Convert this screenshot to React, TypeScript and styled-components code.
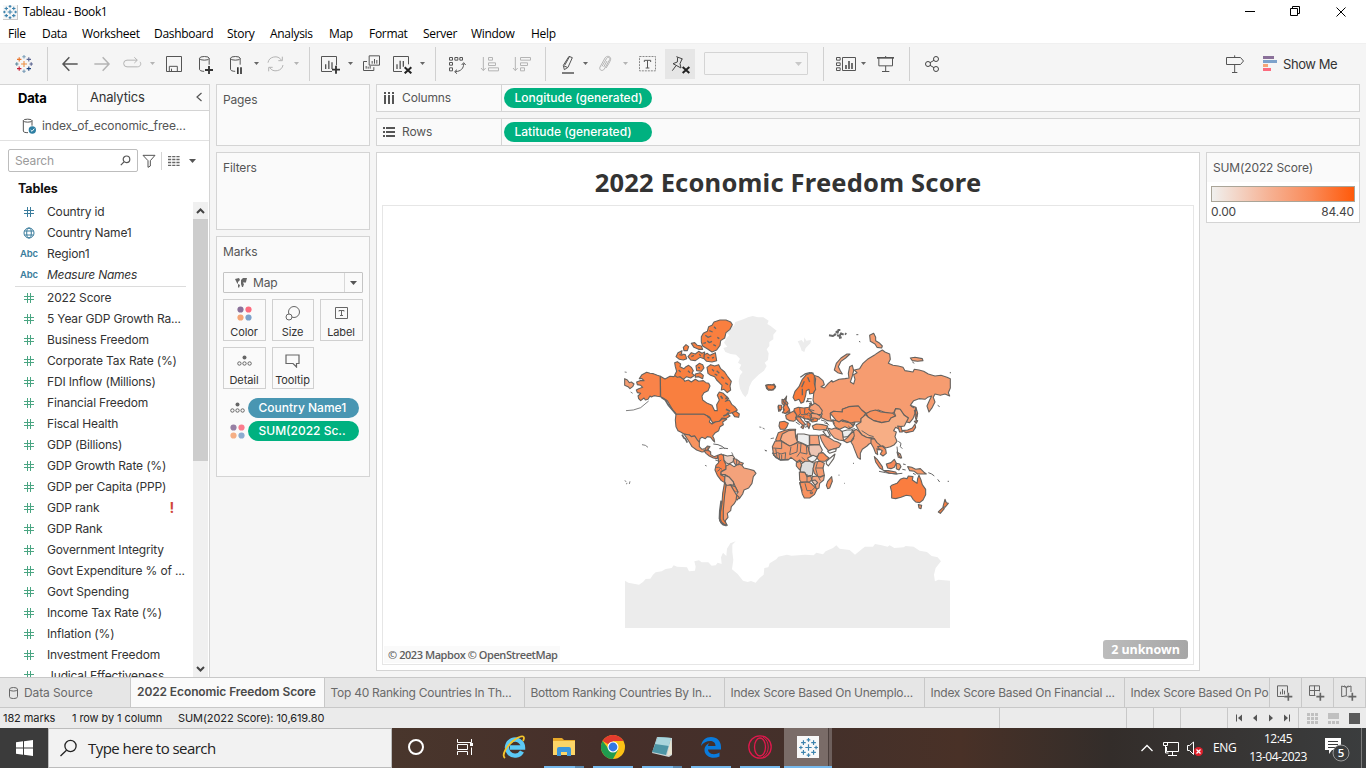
import React from "react";
import styled, { createGlobalStyle } from "styled-components";

const book = `Inter, "Liberation Sans", sans-serif`;
const system = `"Open Sans", "Noto Sans", sans-serif`;

const GlobalStyle = createGlobalStyle`
  * { box-sizing: border-box; }
  body { margin: 0; overflow: hidden; background: #fff; }
  svg { display: block; flex: none; }
`;

const Window = styled.div`
  width: 1366px;
  height: 768px;
  display: flex;
  flex-direction: column;
  overflow: hidden;
  background: #f5f5f5;
  font-family: ${book};
  font-size: 12px;
  letter-spacing: -0.14px;
  color: #333;
  white-space: nowrap;
`;

/* ---------- title bar and menu ---------- */
const TitleBar = styled.header`
  height: 22px;
  display: flex;
  align-items: center;
  background: #fff;
  padding: 2px 0 0 3px;
  gap: 5px;
`;
const WindowTitle = styled.span`
  flex: 1;
  font: 12px/18px ${system};
  letter-spacing: -0.37px;
  color: #000;
`;
const MenuBar = styled.nav`
  height: 22px;
  display: flex;
  padding-left: 8px;
  background: #fff;
  border-bottom: 1px solid #f0f0f0;
`;
const MenuItem = styled.span<{ $w: number }>`
  width: ${(p) => p.$w}px;
  font: 12px/23px ${system};
  letter-spacing: -0.3px;
  color: #000;
`;

/* ---------- toolbar ---------- */
const ToolBar = styled.div`
  height: 40px;
  display: flex;
  align-items: center;
  background: #f5f5f5;
`;
const Tool = styled.div<{ $gap: number; $active?: boolean }>`
  margin-left: ${(p) => p.$gap}px;
  display: flex;
  align-items: center;
  justify-content: center;
  background: ${(p) => (p.$active ? "#e6e6e6" : "none")};
`;
const ToolDivider = styled.div<{ $gap: number }>`
  margin-left: ${(p) => p.$gap}px;
  width: 1px;
  height: 34px;
  background: #d0d0d0;
`;
const FitSelect = styled.div`
  margin: 0 0 1px 9px;
  width: 104px;
  height: 23px;
  border: 1px solid #d4d4d4;
  border-radius: 1px;
  display: flex;
  align-items: center;
  justify-content: flex-end;
  padding-right: 5px;
`;
const ShowMe = styled.span`
  margin-left: 5px;
  padding-bottom: 1px;
  font-size: 13px;
  letter-spacing: -0.42px;
  color: #333;
`;

/* ---------- main area ---------- */
const Main = styled.main`
  height: 593px;
  display: flex;
`;
const DataPane = styled.aside`
  width: 210px;
  background: #fff;
  border-right: 1px solid #d4d4d4;
  border-top: 1px solid #d4d4d4;
  display: flex;
  flex-direction: column;
`;
const PaneTabs = styled.div`
  display: flex;
  height: 26px;
`;
const PaneTab = styled.div<{ $active?: boolean }>`
  width: ${(p) => (p.$active ? 77 : 132)}px;
  display: flex;
  align-items: center;
  justify-content: space-between;
  padding: 0 7px 1px ${(p) => (p.$active ? 18 : 12)}px;
  font-size: 13px;
  font-weight: ${(p) => (p.$active ? 700 : 400)};
  letter-spacing: -0.2px;
  color: ${(p) => (p.$active ? "#000" : "#333")};
  background: ${(p) => (p.$active ? "#fff" : "#fafafa")};
  border-left: ${(p) => (p.$active ? "none" : "1px solid #d4d4d4")};
  border-bottom: ${(p) => (p.$active ? "none" : "1px solid #d4d4d4")};
`;
const SourceRow = styled.div`
  height: 30px;
  display: flex;
  align-items: center;
  gap: 5px;
  padding-left: 22px;
  color: #555;
  border-bottom: 1px solid #e1e1e1;
`;
const SearchRow = styled.div`
  display: flex;
  align-items: center;
  padding: 8px 0 0 8px;
`;
const SearchBox = styled.div`
  width: 130px;
  height: 23px;
  border: 1px solid #bdbdbd;
  border-radius: 2px;
  display: flex;
  align-items: center;
  justify-content: space-between;
  padding: 0 6px;
  color: #9a9a9a;
  margin-right: 4px;
`;
const ThinRule = styled.div`
  width: 1px;
  height: 18px;
  margin: 0 6px 0 5px;
  background: #d4d4d4;
`;
const TablesHeading = styled.h2`
  margin: 0;
  padding: 8px 0 0 18px;
  height: 29px;
  font-size: 12.5px;
  line-height: 18px;
  font-weight: 700;
  color: #111;
`;
const FieldArea = styled.div`
  flex: 1;
  min-height: 0;
  display: flex;
`;
const Fields = styled.div`
  flex: 1;
  overflow: hidden;
`;
const Field = styled.div`
  height: 21px;
  display: flex;
  align-items: center;
  color: #333;
`;
const FieldIcon = styled.span`
  width: 47px;
  padding-left: 20px;
  font-size: 9.5px;
  font-weight: 600;
  color: #3a7c9c;
`;
const FieldName = styled.span<{ $italic?: boolean }>`
  flex: 1;
  font-style: ${(p) => (p.$italic ? "italic" : "normal")};
  letter-spacing: ${(p) => (p.$italic ? -0.25 : -0.16)}px;
`;
const Warning = styled.b`
  margin-right: 19px;
  font-size: 14px;
  color: #d0453a;
`;
const FieldDivider = styled.div`
  height: 1px;
  margin: 1px 7px 0 15px;
  background: #dcdcdc;
`;
const ScrollTrack = styled.div`
  width: 16px;
  display: flex;
  flex-direction: column;
  background: #f0f0f0;
  margin-top: 1px;
  border-right: 1px solid #fff;
`;
const ScrollButton = styled.div`
  height: 17px;
  display: flex;
  align-items: center;
  justify-content: center;
`;
const ScrollThumb = styled.div`
  height: 242px;
  background: #cdcdcd;
`;
const ScrollSpace = styled.div`
  flex: 1;
`;

/* ---------- shelves ---------- */
const ShelfColumn = styled.div`
  margin-left: 6px;
  width: 154px;
  display: flex;
  flex-direction: column;
  gap: 6px;
`;
const Card = styled.section<{ $h: number }>`
  height: ${(p) => p.$h}px;
  background: #fafafa;
  border: 1px solid #d4d4d4;
`;
const CardTitle = styled.div`
  padding: 6px 0 0 6px;
  line-height: 18px;
  color: #555;
`;
const MarkType = styled.div`
  margin: 11px 6px 0;
  height: 21px;
  padding-left: 10px;
  display: flex;
  align-items: center;
  border: 1px solid #c4c4c4;
  border-radius: 1px;
  color: #555;
  background: #fafafa;
`;
const MarkTypeName = styled.span`
  flex: 1;
  margin-left: 5px;
`;
const MarkTypeArrow = styled.span`
  width: 18px;
  height: 100%;
  border-left: 1px solid #d8d8d8;
  display: flex;
  align-items: center;
  justify-content: center;
`;
const MarkGrid = styled.div`
  display: grid;
  grid-template-columns: 43px 42px 43px;
  grid-auto-rows: 42px;
  gap: 6px;
  padding: 6px 6px 0;
`;
const MarkButton = styled.div`
  border: 1px solid #d0d0d0;
  display: flex;
  flex-direction: column;
  align-items: center;
  justify-content: space-between;
  padding: 3px 1px 0 0;
  font-size: 11px;
  line-height: 15px;
  letter-spacing: -0.1px;
  color: #333;
`;
const Encodings = styled.div`
  display: flex;
  flex-direction: column;
  gap: 3px;
  padding: 9px 0 0 12px;
`;
const Encoding = styled.div`
  display: flex;
  align-items: center;
  gap: 3px;
`;
const Pill = styled.div<{ $w: number; $blue?: boolean }>`
  width: ${(p) => p.$w}px;
  height: 20px;
  border-radius: 10px;
  padding-left: 10.5px;
  font-size: 12px;
  line-height: 20px;
  font-weight: 500;
  letter-spacing: 0;
  color: #fff;
  background: ${(p) => (p.$blue ? "#4996b2" : "#00b180")};
`;
const WorkArea = styled.div`
  flex: 1;
  margin: 0 6px;
  display: flex;
  flex-direction: column;
  gap: 6px;
`;
const Shelf = styled.div`
  height: 28px;
  display: flex;
  align-items: center;
  background: #fafafa;
  border: 1px solid #d4d4d4;
`;
const ShelfName = styled.div`
  width: 125px;
  height: 100%;
  padding: 0 0 1px 6px;
  margin-right: 2px;
  display: flex;
  align-items: center;
  gap: 6px;
  color: #555;
  border-right: 1px solid #d4d4d4;
`;
const Canvas = styled.div`
  display: flex;
  align-items: flex-start;
  gap: 6px;
`;
const View = styled.section`
  width: 824px;
  height: 519px;
  padding: 0 5px;
  background: #fff;
  border: 1px solid #d4d4d4;
`;
const ViewTitle = styled.h1`
  margin: 0;
  height: 52px;
  text-align: center;
  font: 700 25.5px/58px "Noto Sans", sans-serif;
  letter-spacing: 0.2px;
  color: #333;
`;
const MapFrame = styled.div`
  position: relative;
  width: 812px;
  height: 460px;
  border: 1px solid #e6e6e6;
`;
const Attribution = styled.span`
  position: absolute;
  left: 1px;
  bottom: 1px;
  padding: 0 2px 0 4px;
  font: 600 11px/17px ${system};
  letter-spacing: -0.44px;
  color: #5e5e5e;
  background: #fafafa;
`;
const UnknownBadge = styled.span`
  position: absolute;
  right: 5px;
  bottom: 5px;
  width: 85px;
  height: 19px;
  border-radius: 3px;
  text-align: center;
  font: 700 12.5px/19px ${system};
  letter-spacing: -0.1px;
  color: #fff;
  background: linear-gradient(90deg, #bcbcbc, #a6a6a6);
`;
const Legend = styled.aside`
  width: 154px;
  height: 71px;
  background: #fff;
  border: 1px solid #d4d4d4;
`;
const LegendTitle = styled.div`
  height: 29px;
  padding: 0 6px;
  line-height: 30px;
  background: #fafafa;
  color: #555;
`;
const Ramp = styled.div`
  margin: 4px 4px 0;
  height: 16px;
  border: 1px solid #aaa598;
  background: linear-gradient(90deg, #f0f0ee, #f6b294 40%, #fa8a58 70%, #ff5a0a);
`;
const RampRange = styled.div`
  display: flex;
  justify-content: space-between;
  padding: 0 5px 0 4px;
  line-height: 19px;
  color: #444;
`;

/* ---------- sheet tabs and status ---------- */
const SheetTabs = styled.nav`
  height: 31px;
  display: flex;
  background: #e6e6e6;
  border-top: 1px solid #c8c8c8;
  border-bottom: 1px solid #c8c8c8;
`;
const SheetTab = styled.div<{ $w: number; $active?: boolean; $tight?: boolean }>`
  width: ${(p) => p.$w}px;
  display: flex;
  align-items: center;
  gap: 6px;
  padding-left: ${(p) => (p.$tight ? 5.5 : 6)}px;
  overflow: hidden;
  border-right: 1px solid #c8c8c8;
  font-size: 12px;
  font-weight: ${(p) => (p.$active ? 600 : 400)};
  letter-spacing: ${(p) => (p.$tight ? -0.26 : -0.1)}px;
  padding-bottom: ${(p) => (p.$active ? 2 : 0)}px;
  color: ${(p) => (p.$active ? "#4a4a4a" : "#6a6a6a")};
  background: ${(p) => (p.$active ? "#fafafa" : "none")};
`;
const StatusBar = styled.footer`
  height: 20px;
  display: flex;
  align-items: center;
  background: #ebebeb;
  font-size: 11px;
  color: #222;
`;
const StatusText = styled.span<{ $w: number }>`
  width: ${(p) => p.$w}px;
  letter-spacing: -0.08px;
`;
const StatusCell = styled.div<{ $w: number }>`
  width: ${(p) => p.$w}px;
  height: 20px;
  border-left: 1px solid #c8c8c8;
  display: flex;
  align-items: center;
  justify-content: center;
`;

/* ---------- taskbar ---------- */
const TaskBar = styled.div`
  height: 40px;
  display: flex;
  background: linear-gradient(90deg, #3b3b3b 0, #3b3b3b 48px, #49362c 392px, #462f2a 600px, #44302a 830px, #493127 960px, #332d2a 1110px, #3b3d3e 1366px);
  color: #fff;
`;
const StartButton = styled.div`
  width: 48px;
  display: flex;
  align-items: center;
  justify-content: center;
`;
const TaskSearch = styled.div`
  width: 344px;
  display: flex;
  align-items: center;
  gap: 11px;
  padding-left: 11px;
  background: #f2f2f2;
  border: 1px solid #bcbcbc;
  color: #222;
  font: 15px/38px ${system};
  letter-spacing: -0.55px;
`;
const TaskButton = styled.div<{ $w: number; $active?: boolean }>`
  width: ${(p) => p.$w}px;
  height: 40px;
  display: flex;
  flex-direction: column;
  align-items: center;
  background: ${(p) => (p.$active ? "linear-gradient(90deg, #7a6c68 0 44px, #4b3f3c 44px 45px, #6d5f5c 45px)" : "none")};
`;
const TaskUnderline = styled.div<{ $w: number; $split?: boolean }>`
  width: ${(p) => p.$w}px;
  height: 2px;
  background: ${(p) => (p.$split ? "linear-gradient(90deg, #76b9ed 31px, #5a89b0 31px)" : "#76b9ed")};
`;
const Tray = styled.div`
  flex: 1;
  display: flex;
  justify-content: flex-end;
  align-items: center;
  font: 12px/18px ${system};
`;
const Language = styled.span`
  width: 30px;
  margin-left: 5px;
  letter-spacing: -0.4px;
`;
const Clock = styled.div`
  width: 70px;
  text-align: center;
  letter-spacing: -0.5px;
  line-height: 18px;
  margin-right: 7px;
`;
const DesktopEdge = styled.div`
  width: 5px;
  height: 40px;
  border-left: 1px solid #7c7c7c;
`;

const IconSlot = styled.span`
  width: 18px;
  display: flex;
  justify-content: center;
`;
const IconBox = styled.span`
  min-width: 16px;
  height: 20px;
  display: flex;
  align-items: center;
  justify-content: center;
`;
const AppIcon = styled.span`
  height: 38px;
  display: flex;
  align-items: center;
`;
const TableauTile = styled.span`
  width: 22px;
  height: 22px;
  display: flex;
  align-items: center;
  justify-content: center;
  background: #f8f8f8;
`;
const SourceIcon = styled.svg`
  margin-left: 3px;
`;
const Indent = styled.span`
  display: inline-block;
  width: 3px;
`;
const EdgeGap = styled.span`
  width: 9px;
`;

/* Glyphs are drawn on a grid of three units per pixel. */
type GlyphProps = { w: number; h?: number; vb: string; color?: string; children: React.ReactNode };
const Glyph = ({ w, h = 20, vb, color = "#555", children }: GlyphProps) => (
  <svg width={w} height={h} viewBox={vb} fill="none" stroke={color} strokeWidth={3}>
    {children}
  </svg>
);

const Caret = ({ color = "#666" }: { color?: string }) => (
  <svg width={7} height={4} viewBox="0 0 7 4">
    <path d="M1 0h5L3.5 3z" fill={color} />
  </svg>
);
const BigCaret = ({ color = "#555" }: { color?: string }) => (
  <svg width={7} height={4} viewBox="0 0 7 4">
    <path d="M0 0h7L3.5 4z" fill={color} />
  </svg>
);

const crosses: [number, number, number, string][] = [
  [9, 9, 3, "#eb8f44"],
  [9, 1.8, 1.7, "#7b9fb8"],
  [9, 16.2, 1.7, "#7599b5"],
  [1.8, 9, 1.7, "#5b879b"],
  [16.2, 9, 1.7, "#5b6591"],
  [4.2, 4.4, 2.2, "#e8762d"],
  [13.8, 4.4, 2.2, "#5c6692"],
  [4.2, 13.6, 2.2, "#c72037"],
  [13.8, 13.6, 2.2, "#1f447e"],
];
const TableauMark = ({ size, mono }: { size: number; mono?: boolean }) => (
  <svg width={size} height={size} viewBox="0 0 18 18">
    {crosses.map(([x, y, r, c], i) => (
      <path key={i} d={`M${x - r} ${y}h${2 * r}M${x} ${y - r}v${2 * r}`} stroke={mono ? "#3d83ad" : c} strokeWidth={1.1} />
    ))}
  </svg>
);

const Plus = ({ x, y }: { x: number; y: number }) => (
  <path d={`M${x - 12} ${y}h24M${x} ${y - 12}v24`} stroke="#333" strokeWidth={5.5} />
);
const Cross = ({ x, y }: { x: number; y: number }) => (
  <path d={`M${x - 10} ${y - 9}l20 18M${x + 10} ${y - 9}l-20 18`} stroke="#222" strokeWidth={6} />
);

const Hash = ({ color = "#4aa582" }: { color?: string }) => (
  <svg width={10} height={10} viewBox="0 0 10 10">
    <path d="M3.5 0v10M6.500 0v10M0 3.500h10M0 6.500h10" stroke={color} strokeWidth={1} fill="none" />
  </svg>
);
const Globe = () => (
  <svg width={12} height={12} viewBox="0 0 12 12" fill="none" stroke="#3a7c9c">
    <circle cx={6} cy={6} r={5} />
    <ellipse cx={6} cy={6} rx={2.3} ry={5} />
    <path d="M1.500 4h9M1.500 8h9" />
  </svg>
);
const ColorDots = ({ soft }: { soft?: boolean }) => (
  <svg width={15} height={15} viewBox="0 0 15 15" opacity={soft ? 0.88 : 1}>
    <circle cx={3.5} cy={3.5} r={3.1} fill="#8a7099" />
    <circle cx={11.5} cy={3.5} r={3.1} fill="#fc6b7e" />
    <circle cx={3.5} cy={11.5} r={3.1} fill="#f5a576" />
    <circle cx={11.5} cy={11.5} r={3.1} fill="#7da2cb" />
  </svg>
);
const DetailDots = () => (
  <svg width={15} height={12} viewBox="0 0 15 12" fill="none" stroke="#666">
    <circle cx={7.5} cy={2.5} r={2} fill="#666" stroke="none" />
    <circle cx={2.4} cy={8.5} r={1.7} />
    <circle cx={7.5} cy={8.5} r={1.7} />
    <circle cx={12.6} cy={8.5} r={1.7} />
  </svg>
);

const Toolbar = () => (
  <ToolBar>
    <Tool $gap={15}><TableauMark size={18} /></Tool>
    <ToolDivider $gap={14} />
    <Tool $gap={13}><Glyph w={18} vb="183 162 54 60"><path d="M233 192H190M208 172l-19 20 19 20" strokeWidth={4.5} /></Glyph></Tool>
    <Tool $gap={14}><Glyph w={18} vb="279 162 54 60" color="#b4b4b4"><path d="M283 192h43M308 172l19 20-19 20" strokeWidth={4.5} /></Glyph></Tool>
    <Tool $gap={11}><Glyph w={20} vb="366 162 60 60" color="#b4b4b4"><path d="M411 180.500H381a10 10 0 0 0 0 20h31c9 0 13-8 8-15M403 172l9 8.500-9 8.500" /></Glyph></Tool>
    <Tool $gap={7}><Caret color="#b4b4b4" /></Tool>
    <Tool $gap={9}><Glyph w={18} vb="495 162 54 60"><path d="M499.500 169.500h45v45h-45zM508 214v-15h24v15M514.500 214v-8" /></Glyph></Tool>
    <Tool $gap={14}>
      <Glyph w={18} vb="591 162 54 60">
        <ellipse cx={613} cy={175} rx={14.500} ry={5.500} /><path d="M598.500 175v33c0 3 5 6 14 6M627.500 175v19" /><Plus x={627} y={210} />
      </Glyph>
    </Tool>
    <Tool $gap={13}>
      <Glyph w={18} vb="684 162 54 60">
        <ellipse cx={706} cy={175} rx={14.500} ry={5.500} /><path d="M691.500 175v33c0 3 5 6 14 6M720.500 175v19" /><path d="M713.500 202v20M723 202v20" stroke="#333" strokeWidth={5} />
      </Glyph>
    </Tool>
    <Tool $gap={7}><Caret /></Tool>
    <Tool $gap={7}>
      <Glyph w={18} vb="801 162 54 60" color="#b4b4b4">
        <path d="M804 188a22 21 0 0 1 40-8M849 195a22 21 0 0 1-40 8M847 170v12h-12M806 214v-12h12" />
      </Glyph>
    </Tool>
    <Tool $gap={8}><Caret color="#b4b4b4" /></Tool>
    <ToolDivider $gap={9} />
    <Tool $gap={10}>
      <Glyph w={20} vb="960 162 60 60">
        <path d="M996 214.500H964.500v-45h45V196" /><path d="M977 207v-14M986.500 207v-25M996 207v-20" strokeWidth={4} /><Plus x={1008} y={209} />
      </Glyph>
    </Tool>
    <Tool $gap={7}><Caret /></Tool>
    <Tool $gap={8}>
      <Glyph w={20} vb="1086 162 60 60">
        <path d="M1107.500 167.500h31v28h-31zM1101 184.500h-10.500v27h31v-10M1098.500 206v-8M1104.500 206v-6M1110.500 206v-8M1116.500 191v-8M1123.500 191v-14M1130.500 191v-11" />
      </Glyph>
    </Tool>
    <Tool $gap={10}>
      <Glyph w={20} vb="1176 162 60 60">
        <path d="M1206 214.500H1180.500v-45h45V193" /><path d="M1191 207v-14M1200.500 207v-25M1210 200v-17" strokeWidth={4} /><Cross x={1224} y={211} />
      </Glyph>
    </Tool>
    <Tool $gap={7}><Caret /></Tool>
    <ToolDivider $gap={9} />
    <Tool $gap={12}>
      <Glyph w={18} vb="24 162 54 60">
        <path d="M28.500 172.500h9v8h-9zM44.500 172.500h9v8h-9zM59.500 172.500h8v8h-8zM28.500 187.500h9v8h-9zM28.500 203.500h9v9h-9z" />
        <path d="M71 191c0 14-8 23-25 24M65 195l6-7 6 7M51 209l-7 6 7 6" />
      </Glyph>
    </Tool>
    <Tool $gap={14}>
      <Glyph w={20} vb="120 162 60 60" color="#b4b4b4"><path d="M130 171v40M123 204l7 8 7-8M145.500 172.500h12v8h-12zM145.500 188.500h21v8h-21zM145.500 203.500h30v9h-30z" /></Glyph>
    </Tool>
    <Tool $gap={12}>
      <Glyph w={20} vb="216 162 60 60" color="#b4b4b4"><path d="M226 171v40M219 204l7 8 7-8M241.500 172.500h30v8h-30zM241.500 188.500h21v8h-21zM241.500 203.500h12v9h-12z" /></Glyph>
    </Tool>
    <ToolDivider $gap={13} />
    <Tool $gap={14}>
      <Glyph w={16} vb="360 162 48 60">
        <path d="M387 169l10 4-13 29-11 7-3-13z M372 198l10 4M389 169l-15 27" /><path d="M366 219h36" strokeWidth={4.500} />
      </Glyph>
    </Tool>
    <Tool $gap={6}><Caret /></Tool>
    <Tool $gap={9}>
      <Glyph w={14} vb="474 162 42 60" color="#b4b4b4">
        <path d="M486 199l14-24c4-6 12-2 9 4l-16 28c-5 8-17 4-13-6l15-27c5-8 18-6 17 4-1 6-10 20-14 26M491 201l10-18" />
      </Glyph>
    </Tool>
    <Tool $gap={10}><Caret color="#b4b4b4" /></Tool>
    <Tool $gap={9}>
      <Glyph w={18} vb="594 162 54 60">
        <path d="M598.500 169.500h48v43h-48z" strokeDasharray="6 3" stroke="#888" /><path d="M613 186v-5h19v5M622.500 181v23M617 204h11" />
      </Glyph>
    </Tool>
    <Tool $gap={9} $active>
      <Glyph w={30} h={30} vb="675 147 90 90" color="#444">
        <path d="M709 170l19 7M713 172l-1 14-13 5 24 13-3-13 6-14M708 197l-11 15" /><Cross x={738} y={210} />
      </Glyph>
    </Tool>
    <FitSelect><BigCaret color="#c8c8c8" /></FitSelect>
    <ToolDivider $gap={15} />
    <Tool $gap={11}>
      <Glyph w={22} vb="1185 162 66 60">
        <path d="M1189.500 172.500h11v8h-11zM1189.500 188.500h11v8h-11zM1189.500 203.500h11v8h-11zM1207.500 172.500h39v39h-39z" /><path d="M1218 207v-12M1227 207v-24M1236 207v-18" strokeWidth={5} />
      </Glyph>
    </Tool>
    <Tool $gap={3}><Caret /></Tool>
    <Tool $gap={9}>
      <Glyph w={18} vb="1308 162 54 60"><path d="M1316.500 174v23.500h41V174M1337 198v16M1326 214.500h22M1337 168v5" /><path d="M1311 173.500h51" strokeWidth={5} /></Glyph>
    </Tool>
    <ToolDivider $gap={15} />
    <Tool $gap={14}>
      <Glyph w={16} vb="72 162 48 60" color="#444"><circle cx={84} cy={192} r={7.500} /><circle cx={108} cy={177} r={7.500} /><circle cx={108} cy={207} r={7.500} /><path d="M90 188l12-7M90 196l12 7" /></Glyph>
    </Tool>
    <Tool $gap={285}>
      <Glyph w={20} vb="975 162 60 60"><path d="M979.500 172.500h42l9 10.500-9 10.500h-42zM1004 166v6M1004 194v23M996 217.500h16" /></Glyph>
    </Tool>
    <Tool $gap={17}>
      <svg width={16} height={20} viewBox="0 0 16 20">
        <path d="M1 2h11v3H1z" fill="#8a7099" /><path d="M1 6h14v3H1z" fill="#7da2cb" /><path d="M1 10h5v3H1z" fill="#f5a576" /><path d="M1 14h8v3H1z" fill="#fc6b7e" />
      </svg>
    </Tool>
    <ShowMe>Show Me</ShowMe>
  </ToolBar>
);

/* ---------- map ---------- */
type Shape = [fill: string, d: string];

const americas: Shape[] = [
  ["#f98349", "M62 200 66 194 80 187 90 190 100 191 112 196 121 199 121 260 112 259 102 257 94 261 90 258 84 268 76 270 72 264 62 272 56 266 54 258 62 250 52 248 49 240 56 236 68 232 62 226 52 224 50 216 60 212 72 212 66 206 58 206Z"],
  ["#f69c70", "M14 206 22 210 28 218 34 216 42 222 38 230 30 236 24 230 14 226Z"],
  ["#f97f3f", "M121 199 135 207 150 199 160 200 172 194 182 202 190 206 194 214 205 210 214 216 226 208 236 214 250 212 258 218 266 220 270 228 264 242 252 248 246 258 248 270 262 280 276 286 284 302 292 302 290 284 298 270 292 256 298 246 310 250 318 258 326 266 316 274 328 270 336 284 344 290 352 300 344 306 332 310 322 310 330 318 318 326 306 324 298 334 278 338 268 322 252 313 168 313 158 300 150 286 142 272 122 260Z"],
  ["#f97f3f", "M336 308 348 304 358 312 356 322 344 320Z"],
  ["#f97f3f", "M164 158 172 155 182 162 180 170 192 176 198 170 206 166 214 172 220 182 216 190 224 196 212 204 200 200 190 208 180 200 172 202 164 196 170 184 166 170Z"],
  ["#f97f3f", "M261 172 272 164 284 168 296 164 302 176 314 186 322 198 334 214 330 228 332 240 322 248 312 238 304 240 306 226 298 218 290 210 284 200 272 196 264 190Z"],
  ["#f97f3f", "M168 140 174 128 186 122 184 132 196 134 200 146 190 150 178 148ZM190 112 198 104 206 110 202 122 192 122ZM204 140 214 128 226 132 236 124 246 130 254 126 252 146 240 142 226 152 212 150ZM214 100 224 98 232 106 244 108 248 118 236 118 222 112ZM252 134 262 130 270 136 286 128 290 152 276 156 260 154 252 146ZM228 168 238 160 248 164 252 174 244 184 230 182ZM226 192 240 188 250 196 248 206 236 200 226 202Z"],
  ["#f97f3f", "M244 80 250 70 262 64 266 50 276 46 282 36 300 30 318 30 332 36 337 44 330 58 318 68 314 84 302 92 300 106 290 120 276 126 264 118 248 108 244 96Z"],
  ["#f98349", "M168 313 252 313 262 318 272 326 268 336 276 342 286 336 298 334 308 326 320 328 308 336 310 344 300 350 296 362 286 368 278 378 282 386 284 396 278 390 272 382 262 380 256 386 246 382 240 386 238 397 232 390 224 378 214 380 208 375 192 372 182 366 174 362 168 350 166 330Z"],
  ["#f7935f", "M192 372 208 375 214 380 224 378 232 390 238 397 238 410 246 418 256 416 262 408 270 410 260 424 246 426 230 420 216 410 210 400 204 390Z"],
  ["#f8895a", "M252 422 264 420 272 426 272 434 282 440 294 436 292 446 280 444 268 438 258 430Z"],
  ["#f98048", "M294 436 304 432 312 438 312 452 318 464 318 478 304 484 302 494 314 500 314 518 304 512 292 496 285 480 288 466 296 458Z"],
  ["#e9cdbf", "M310 434 322 438 338 436 344 444 338 456 326 462 318 458 312 450Z"],
  ["#f69a70", "M340 446 350 448 360 456 370 460 362 470 348 466 342 458Z"],
  ["#f3a27b", "M303 486 318 478 318 468 330 462 342 470 356 462 366 466 372 474 388 478 402 482 408 490 400 500 396 520 386 534 372 540 368 552 358 566 348 556 354 546 346 530 340 516 328 502 316 494 304 494Z"],
  ["#edb79b", "M315 496 328 502 340 516 342 526 330 524 320 528 314 516Z"],
  ["#f7905d", "M332 526 346 530 354 546 344 546ZM346 552 358 562 352 570 344 564Z"],
  ["#f8a175", "M318 526 332 526 344 546 350 556 348 572 342 582 334 590 332 602 322 610 324 622 316 632 318 642 308 638 306 610 310 570Z"],
  ["#f97f3f", "M314 516 318 526 314 556 310 600 310 628 322 646 308 644 299 632 300 614 306 580 308 550Z"],
  ["#f97f3f", "M437 226 446 224 452 228 462 222 467 230 460 240 446 241 440 236Z"],
  ["#f98048", "M486 268 494 270 500 258 498 272 504 280 500 290 508 298 510 308 494 310 490 298 494 288 486 280ZM474 290 484 290 482 302 476 304Z"],
];

const eastern: Shape[] = [
  ["#f69c70", "M150 196 152 176 146 166 160 170 174 182 178 194 168 200 178 204 190 190 200 182 204 186 222 178 240 176 252 174 250 160 254 140 262 136 266 152 262 168 256 186 266 192 270 178 266 164 276 158 268 150 284 146 294 130 310 116 330 104 342 96 352 90 360 96 374 102 376 118 370 130 384 136 400 138 414 142 420 152 444 156 448 148 462 150 476 154 490 162 510 168 528 166 546 172 556 176 556 204 550 218 554 228 540 222 526 226 510 222 505 232 510 246 502 262 492 276 486 258 494 240 500 228 488 232 480 238 462 236 446 242 436 256 452 262 450 280 444 296 434 308 424 306 430 294 418 286 404 268 392 266 386 278 376 282 356 276 340 270 328 274 304 280 290 270 280 258 252 260 232 268 232 276 206 274 196 280 196 292 200 304 188 302 176 296 166 292 172 282 160 268 150 258 144 240 146 222Z"],
  ["#f8915e", "M196 280 206 274 232 276 232 268 252 260 280 258 290 270 302 280 296 290 288 296 288 306 268 306 258 310 246 304 232 300 222 306 214 302 206 292Z"],
  ["#f8915e", "M303 281 316 274 332 270 348 276 366 278 384 280 392 288 378 294 372 304 350 308 326 302 310 292Z"],
  ["#f7ae85", "M273 316 288 306 288 296 302 284 310 292 326 302 350 308 372 304 378 294 392 288 388 278 392 266 406 268 418 286 430 294 424 306 418 318 406 320 400 326 392 322 386 332 394 336 390 350 396 364 388 374 376 380 362 384 354 378 344 380 336 370 326 366 326 354 304 352 290 344 282 332Z"],
  ["#f6a077", "M264 334 274 328 282 334 290 344 304 352 322 356 320 368 312 372 306 378 292 388 286 400 286 418 278 412 270 392 264 376 258 366 266 356Z"],
  ["#f69c70", "M236 362 248 352 256 342 266 334 268 348 258 364 246 368Z"],
  ["#ededed", "M232 334 246 330 264 330 256 342 248 350 234 352Z"],
  ["#f7a883", "M188 324 200 328 210 324 226 330 232 336 234 352 236 362 222 360 208 354 196 340Z"],
  ["#f79a69", "M202 300 214 302 222 306 232 300 246 306 258 310 270 308 264 320 252 326 240 320 224 328 212 322 206 312Z"],
  ["#f79a69", "M142 318 154 312 172 314 188 318 184 328 164 330 146 328Z"],
  ["#f4a07a", "M164 346 176 344 190 352 206 362 218 366 228 372 222 382 204 388 190 392 180 380 170 362Z"],
  ["#fafafa", "M174 334 186 330 196 348 186 350ZM188 394 202 388 214 386 212 394 194 400Z"],
  ["#f97b3a", "M84 232 90 214 102 200 112 178 124 164 140 158 148 166 148 190 152 208 144 220 134 222 132 208 124 212 122 226 116 246 108 250 102 238 90 242Z"],
  ["#f97f45", "M88 266 100 262 116 264 132 262 138 248 144 260 154 268 150 280 160 292 156 304 142 306 130 298 118 296 108 290 94 288 86 278Z"],
  ["#f6a077", "M136 258 150 250 162 258 172 272 168 284 154 284 140 276 132 268Z"],
  ["#f6a077", "M138 280 156 282 170 290 162 298 150 294 140 294Z"],
  ["#f8915e", "M62 286 76 278 88 272 94 284 94 298 86 304 74 302 64 296Z"],
  ["#f97f45", "M44 306 58 304 70 310 66 320 60 328 46 328 42 318Z"],
  ["#f97f45", "M54 262 60 254 54 242 62 234 60 248 68 258 74 270 62 280 52 278 58 270ZM40 256 50 256 50 268 42 270Z"],
  ["#f8895a", "M92 292 104 290 110 300 122 314 114 316 100 304ZM110 318 118 318 114 326 108 322ZM126 304 136 312 132 326 126 316Z"],
  ["#f97f3f", "M4 196 16 194 28 196 30 204 20 210 8 206Z"],
  ["#f7905d", "M40 338 56 332 74 328 92 328 90 338 96 352 94 366 76 378 68 374 56 372 42 370 32 360Z"],
  ["#f7ad87", "M52 342 70 332 90 330 92 352 98 366 76 380 46 360Z"],
  ["#f69c70", "M22 380 30 364 46 362 74 378 98 368 116 372 130 382 134 402 146 412 134 428 116 430 104 420 96 426 78 412 70 420 46 420 26 406Z"],
  ["#eeeeee", "M97 342 117 342 133 346 133 378 125 376 109 368 97 364Z"],
  ["#f6a27b", "M134 346 160 346 164 374 134 374Z"],
  ["#edc4b2", "M132 376 164 374 172 390 164 406 148 412 136 404 132 392Z"],
  ["#f0f0f0", "M128 414 144 406 158 412 150 422 140 426 130 420Z"],
  ["#f7905d", "M162 400 174 398 184 408 192 414 180 424 164 424 156 414Z"],
  ["#fafafa", "M184 424 210 402 206 416 190 438 184 432Z"],
  ["#dddddd", "M108 432 120 424 134 424 148 430 144 450 142 466 126 468 118 456 106 456Z"],
  ["#f69c70", "M94 428 106 424 110 436 104 450 94 438ZM150 426 166 424 178 430 174 444 178 466 162 472 148 460 144 446Z"],
  ["#f69c70", "M103 456 120 458 126 470 138 468 140 480 134 486 108 486 104 480Z"],
  ["#f7a883", "M142 470 156 468 166 472 178 466 176 480 164 490 162 504 154 508 150 494 140 482Z"],
  ["#f8915e", "M104 488 128 486 138 490 150 502 156 508 148 524 134 534 118 534 112 522Z"],
  ["#e9c4b2", "M140 482 150 480 158 488 150 496Z"],
  ["#f7905d", "M188 484 200 470 202 484 194 504 188 506 184 496Z"],
  ["#f69c70", "M208 150 214 130 228 114 246 102 255 102 242 114 228 124 220 140 226 152 232 162 218 158Z"],
  ["#f69c70", "M314 46 326 40 332 52 332 62 342 68 352 78 350 84 336 82 330 72 316 64ZM436 114 450 112 472 116 474 122 458 124 442 122Z"],
  ["#f69c70", "M318 358 328 356 336 368 344 374 350 384 342 390 336 386 338 404 332 400 326 384 318 370Z"],
  ["#f8915e", "M338 380 352 378 362 388 364 400 354 408 346 402 352 392 342 386Z"],
  ["#f8895a", "M328 410 338 420 352 440 354 450 344 444 332 426ZM356 452 370 452 392 456 396 462 372 460ZM364 432 378 428 388 418 394 430 388 442 378 446 368 444Z"],
  ["#f79a69", "M394 430 404 432 408 440 402 450 394 446ZM428 440 440 442 452 448 466 446 476 456 484 462 470 462 458 462 448 454 434 452ZM396 396 406 402 410 414 400 412Z"],
  ["#f8895a", "M453 262 458 280 454 302 450 288ZM412 332 428 330 442 324 450 312 452 322 444 334 424 338ZM448 304 458 302 454 310ZM398 318 408 320 412 336 404 336Z"],
  ["#fb7d3f", "M376 500 380 496 396 490 406 478 416 474 426 476 430 468 444 470 442 480 456 490 458 476 462 466 468 480 472 494 482 508 482 524 474 540 464 548 452 546 444 538 438 528 424 526 408 532 392 536 380 534 380 516Z"],
  ["#f8915e", "M460 554 470 556 468 566 462 564Z"],
  ["#fb7d3f", "M540 538 544 548 550 550 540 562 534 560ZM534 562 538 566 526 580 520 576Z"],
];

const World = () => (
  <svg width={810} height={458} viewBox="383 206 810 458" strokeLinejoin="round">
    <path
      transform="translate(615 530) scale(.3333)"
      fill="#ececec"
      d="M30 152 40 158 56 161 72 164 84 156 92 147 106 146 114 134 122 127 140 124 152 117 170 114 176 106 186 110 216 112 222 124 240 122 242 110 238 94 252 91 260 97 280 97 290 107 302 106 308 98 320 102 318 82 324 68 334 78 336 56 346 40 362 34 352 44 352 66 355 90 351 118 368 132 384 152 398 156 408 153 422 158 434 144 446 134 448 114 460 112 464 100 484 88 490 80 516 74 530 77 570 74 596 76 604 68 624 73 632 64 654 54 664 46 674 56 704 60 720 74 740 58 750 50 774 50 780 42 800 46 818 50 824 46 838 54 866 52 872 48 896 50 914 62 936 66 950 78 968 82 978 94 962 114 957 134 960 154 970 149 1005 152 1005 294 30 294Z"
    />
    <g transform="translate(620 310) scale(.3333)">
      <path fill="#ececec" d="M311 54 326 50 342 48 346 36 370 28 384 22 398 18 414 22 430 22 446 32 442 42 452 48 470 62 460 74 460 88 448 96 448 108 440 118 446 130 444 150 434 158 440 168 432 182 416 194 406 204 396 214 388 230 384 250 376 262 368 252 360 236 356 214 360 196 368 186 358 176 364 164 354 158 360 146 348 134 332 132 316 126 310 114 322 110 312 98 320 84 328 76 316 66Z" />
      <g stroke="#66625e" strokeWidth={3.3}>
        {americas.map(([fill, d], i) => <path key={i} fill={fill} d={d} />)}
      </g>
      <g fill="none" stroke="#666" strokeWidth={3}>
        <path d="M18 302l22-2 22-7 24-20M32 246l6 4M14 186l6 1M66 404l10 2 8 6M418 351l6 1M428 354l6 3M434 420l6 3M255 466l5 2M14 512l5 3M18 522l4-2M30 514l-2 8M335 427l4 8M452 386l10-2" strokeWidth={2.5} />
        <path d="M256 76l8 6 10-4M268 62l10 4M282 50l6 6M262 92l6 6 8-4M280 104l8 4M250 100l8-2M292 82l6 4M178 134l10 2M214 140l8-4M238 132l4 6M234 172l6 2M262 142l6 2M276 144l6-2M176 180l6 6M204 182l6 6M276 178l6 6M290 182l8 8M304 200l8 6M316 218l8 6M284 192l8 4" strokeWidth={4} />
        <path d="M124 262l12 8 8 14 10 12 14 16M262 318l8 6M186 374l6 10 4 2 6 12M302 258l6 8M316 266l8-4M310 318l10-4 6-6M318 298l12 6" strokeWidth={5} />
        <path d="M304 572l-4 30-1 24 5 12 8 6 8 3" strokeWidth={6} />
        <path d="M286 450l12 4 6-4M286 472l10 0 10 6M292 484l8-6M350 450l0 16M358 456l-2 10M280 402l14 2 14 6 6 6M298 416l12-2 14 2M256 412l2 12M264 410v14" />
      </g>
    </g>
    <g transform="translate(765 320) scale(.3333)">
      <path fill="#ececec" d="M98 64 110 60 116 68 118 52 124 62 138 60 136 70 128 78 122 84 118 96 110 92 106 80Z" />
      <g stroke="#66625e" strokeWidth={3.3}>
        {eastern.map(([fill, d], i) => <path key={i} fill={fill} d={d} />)}
      </g>
      <g fill="none" stroke="#666" strokeWidth={3}>
        <path d="M192 46l12 2 6-4M212 34l6 4 2-8 6 0M216 46l8 2 4-8 8 4M222 54l8-2M240 40l4 3M208 42l6 2" strokeWidth={6} />
        <path d="M274 44l6 0M282 64l4 2M442 126l6 4M556 156v4M518 256l6 4M400 364l8 6-2 10 6 6M396 380l2 18 8 18M342 454l20 4 30 4 20-2M412 448l10 2M414 432l8 2M444 460l8 4M490 458l10 4 8 6M518 478l6 8M548 484l4 0M222 464v3M238 490h2M264 430h3M0 392h5" />
        <path d="M106 172l14-10 14-4 12 2M110 202l8-18M128 172l6 14M112 206v20M130 238l-6 8" strokeWidth={4} />
        <path d="M104 262l2 20-8 6M120 264l-2 16 12 6M130 268l18 4M108 284l14 0 10-6 8 10M116 288l4 16 14 2M134 284l4 18 10-6M126 296l20 4M86 276l10 8-4 14M92 306l12 8M120 322l10-4M126 236l14 0M126 244l14 2M132 250l10 6" />
        <path d="M50 364v22l-26-2M62 398l-2 22M78 380l-4 24 22-8 2-24M32 386l4 24M42 400l2 18M50 404v16M26 402l12-4 10 4 14-4M108 372l-2 24-10 14M106 398l20 4-2-26M110 412l10 8" />
        <path d="M120 490l6 22 14 0 12-12M104 488l8 24M126 486v-24M136 516h6v5h-6zM152 444h24M158 424l-6 22 6 22M160 470l6 12" />
        <path d="M168 300l14 4 10 12M178 308l10 4M204 298l4 14M230 304l24 4 10 10M250 318l10 10 10-2M260 314l10 0M290 332l22 14 14 4" />
        <path d="M22 398l10 14 14 8 24-2M204 186l-6-4M438 258l10 6M448 270l8 20" strokeWidth={4} />
      </g>
    </g>
  </svg>
);

const dimensions: [React.ReactNode, string][] = [
  [<IconSlot><Hash color="#3a7c9c" /></IconSlot>, "Country id"],
  [<IconSlot><Globe /></IconSlot>, "Country Name1"],
  ["Abc", "Region1"],
  ["Abc", "Measure Names"],
];
const measures: string[] = [
  "2022 Score", "5 Year GDP Growth Ra...", "Business Freedom", "Corporate Tax Rate (%)", "FDI Inflow (Millions)",
  "Financial Freedom", "Fiscal Health", "GDP (Billions)", "GDP Growth Rate (%)", "GDP per Capita (PPP)", "GDP rank",
  "GDP Rank", "Government Integrity", "Govt Expenditure % of ...", "Govt Spending", "Income Tax Rate (%)",
  "Inflation (%)", "Investment Freedom", "Judical Effectiveness",
];
const menus: [string, number][] = [
  ["File", 34], ["Data", 40], ["Worksheet", 72], ["Dashboard", 73], ["Story", 43], ["Analysis", 59],
  ["Map", 40], ["Format", 54], ["Server", 48], ["Window", 60], ["Help", 40],
];

const AddSheet = ({ kind }: { kind: "sheet" | "dashboard" | "story" }) => (
  <Glyph w={17} h={17} vb="0 0 51 51" color="#666">
    {kind === "sheet" && <path d="M26 37.500H4.500V5.500h30V26M13.500 31v-8M19.500 31v-16M25.500 31v-11" />}
    {kind === "dashboard" && <path d="M22 34.500H4.500V5.500h30V22M19.500 5v30M4 19.500h31" />}
    {kind === "story" && <path d="M22 38l-3-3-14 3V6l14 4 14-4v18M19 10v25M12 5l7 5 6-5" />}
    <path d="M25 38h24M37 26v24" strokeWidth={5} />
  </Glyph>
);

export default function App() {
  return (
    <Window>
      <GlobalStyle />
      <TitleBar>
        <svg width={15} height={15} viewBox="0 0 15 15">
          <path d="M0 0h15v15H0z" fill="#c9c9c9" /><path d="M0 0h14v14H0z" fill="#f7f7f7" />
          <g transform="scale(.78)">
            {crosses.map(([x, y, r], i) => <path key={i} d={`M${x - r} ${y}h${2 * r}M${x} ${y - r}v${2 * r}`} stroke="#3d83ad" strokeWidth={1.4} />)}
          </g>
        </svg>
        <WindowTitle>Tableau - Book1</WindowTitle>
        <svg width={126} height={20} viewBox="1240 0 126 20" fill="none" stroke="#000">
          <path d="M1245 9.500h10M1290.500 6.500h7v7h-7zM1292.500 6v-1.500h7v7H1298M1336.500 5.500l9 9M1345.500 5.500l-9 9" />
        </svg>
      </TitleBar>
      <MenuBar>{menus.map(([name, w]) => <MenuItem key={name} $w={w}>{name}</MenuItem>)}</MenuBar>
      <Toolbar />
      <Main>
        <DataPane>
          <PaneTabs>
            <PaneTab $active>Data</PaneTab>
            <PaneTab>
              Analytics
              <svg width={6} height={10} viewBox="0 0 6 10" fill="none" stroke="#555"><path d="M5.500 1L1 5l4.500 4" strokeWidth={1.200} /></svg>
            </PaneTab>
          </PaneTabs>
          <SourceRow>
            <Glyph w={15} h={16} vb="66 351 45 48">
              <ellipse cx={83} cy={359} rx={13} ry={4.500} /><path d="M70 359v31c0 4 6 5 14 5M96 359v15" />
              <circle cx={97} cy={387} r={11} fill="#2e7fa3" stroke="none" /><path d="M92 387l4 4 7-8" stroke="#fff" />
            </Glyph>
            index_of_economic_free...
          </SourceRow>
          <SearchRow>
            <SearchBox>
              Search
              <svg width={11} height={11} viewBox="0 0 11 11" fill="none" stroke="#555" strokeWidth={1.200}><circle cx={6.500} cy={4.300} r={3.300} /><path d="M4 6.800L0.800 10.200" /></svg>
            </SearchBox>
            <Glyph w={14} h={14} vb="0 0 42 42"><path d="M3 4h36L25 20v16l-7 4V20z" /></Glyph>
            <ThinRule />
            <svg width={12} height={10} viewBox="0 0 12 10" stroke="#666" strokeDasharray="3.200 1"><path d="M0 .5h12M0 3.500h12M0 6.500h12M0 9.500h12" strokeWidth={1.300} /></svg>
            <Tool $gap={9}><BigCaret /></Tool>
          </SearchRow>
          <TablesHeading>Tables</TablesHeading>
          <FieldArea>
            <Fields>
              {dimensions.map(([icon, name], i) => (
                <Field key={name}>
                  <FieldIcon>{icon}</FieldIcon>
                  <FieldName $italic={i === 3}>{name}</FieldName>
                </Field>
              ))}
              <FieldDivider />
              {measures.map((name) => (
                <Field key={name}>
                  <FieldIcon><IconSlot><Hash /></IconSlot></FieldIcon>
                  <FieldName>{name}</FieldName>
                  {name === "GDP rank" && <Warning>!</Warning>}
                </Field>
              ))}
            </Fields>
            <ScrollTrack>
              <ScrollButton><svg width={9} height={6} viewBox="0 0 9 6"><path d="M1 5l3.500-3.500L8 5" fill="none" stroke="#444" strokeWidth={2} /></svg></ScrollButton>
              <ScrollThumb />
              <ScrollSpace />
              <ScrollButton><svg width={9} height={6} viewBox="0 0 9 6"><path d="M1 1l3.500 3.500L8 1" fill="none" stroke="#444" strokeWidth={2} /></svg></ScrollButton>
            </ScrollTrack>
          </FieldArea>
        </DataPane>

        <ShelfColumn>
          <Card $h={62}><CardTitle>Pages</CardTitle></Card>
          <Card $h={78}><CardTitle>Filters</CardTitle></Card>
          <Card $h={241}>
            <CardTitle>Marks</CardTitle>
            <MarkType>
              <svg width={14} height={10} viewBox="0 0 14 10" fill="#666">
                <path d="M1 1l4-1 1 2-2 2 0 2-1-1-1-2zM4 6l2 1-1 3-1-1zM7 2l2-2 4 0-1 4-1 1-1-1-1 1 1 1-1 3-1 0-1-3z" />
              </svg>
              <MarkTypeName>Map</MarkTypeName>
              <MarkTypeArrow><BigCaret /></MarkTypeArrow>
            </MarkType>
            <MarkGrid>
              <MarkButton><IconBox><ColorDots /></IconBox>Color</MarkButton>
              <MarkButton>
                <IconBox><svg width={15} height={15} viewBox="0 0 15 15" fill="none" stroke="#666"><circle cx={9} cy={6} r={5.500} /><circle cx={4} cy={11} r={3} fill="#fafafa" /></svg></IconBox>Size
              </MarkButton>
              <MarkButton>
                <IconBox><svg width={13} height={12} viewBox="0 0 13 12" fill="none" stroke="#666"><path d="M.5.500h12v11H.5zM4 4.500v-1h5v1M6.500 3.500v5M5 8.500h3" /></svg></IconBox>Label
              </MarkButton>
              <MarkButton><IconBox><DetailDots /></IconBox>Detail</MarkButton>
              <MarkButton>
                <IconBox><svg width={15} height={14} viewBox="0 0 15 14" fill="none" stroke="#666" strokeWidth={1.200}><path d="M1 1h13v8.500h-2.500V13L8 9.500H1z" /></svg></IconBox>Tooltip
              </MarkButton>
            </MarkGrid>
            <Encodings>
              <Encoding><IconBox><DetailDots /></IconBox><Pill $w={111} $blue>Country Name1</Pill></Encoding>
              <Encoding><IconBox><ColorDots soft /></IconBox><Pill $w={111}>SUM(2022 Sc..</Pill></Encoding>
            </Encodings>
          </Card>
        </ShelfColumn>

        <WorkArea>
          <Shelf>
            <ShelfName>
              <svg width={13} height={12} viewBox="0 0 13 12" fill="#555"><path d="M1 0h2v2H1zM5 0h2v2H5zM9 0h2v2H9zM1 3h2v9H1zM5 3h2v9H5zM9 3h2v9H9z" /></svg>
              Columns
            </ShelfName>
            <Pill $w={148}>Longitude (generated)</Pill>
          </Shelf>
          <Shelf>
            <ShelfName>
              <svg width={13} height={12} viewBox="0 0 13 12" fill="#555"><path d="M0 1h2v2H0zM0 5h2v2H0zM0 9h2v2H0zM3 1h9v2H3zM3 5h9v2H3zM3 9h9v2H3z" /></svg>
              Rows
            </ShelfName>
            <Pill $w={148}>Latitude (generated)</Pill>
          </Shelf>
          <Canvas>
            <View>
              <ViewTitle>2022 Economic Freedom Score</ViewTitle>
              <MapFrame>
                <World />
                <Attribution>© 2023 Mapbox © OpenStreetMap</Attribution>
                <UnknownBadge>2 unknown</UnknownBadge>
              </MapFrame>
            </View>
            <Legend>
              <LegendTitle>SUM(2022 Score)</LegendTitle>
              <Ramp />
              <RampRange><span>0.00</span><span>84.40</span></RampRange>
            </Legend>
          </Canvas>
        </WorkArea>
      </Main>

      <SheetTabs>
        <SheetTab $w={131}>
          <SourceIcon width={9} height={12} viewBox="0 0 9 12" fill="none" stroke="#666"><ellipse cx={4.500} cy={2.300} rx={4} ry={1.800} /><path d="M.5 2.300v7.400c0 2.400 8 2.400 8 0V2.300" /></SourceIcon>
          Data Source
        </SheetTab>
        <SheetTab $w={194} $active>2022 Economic Freedom Score</SheetTab>
        <SheetTab $w={200} $tight>Top 40 Ranking Countries In Th...</SheetTab>
        <SheetTab $w={200} $tight>Bottom Ranking Countries By In...</SheetTab>
        <SheetTab $w={200} $tight>Index Score Based On Unemplo...</SheetTab>
        <SheetTab $w={200} $tight>Index Score Based On Financial ...</SheetTab>
        <SheetTab $w={145} $tight>Index Score Based On Po</SheetTab>
        <SheetTab $w={32}><IconBox><AddSheet kind="sheet" /></IconBox></SheetTab>
        <SheetTab $w={32}><IconBox><AddSheet kind="dashboard" /></IconBox></SheetTab>
        <SheetTab $w={32}><IconBox><AddSheet kind="story" /></IconBox></SheetTab>
      </SheetTabs>
      <StatusBar>
        <StatusText $w={72}><Indent />182 marks</StatusText>
        <StatusText $w={106}>1 row by 1 column</StatusText>
        <StatusText $w={821}>SUM(2022 Score): 10,619.80</StatusText>
        <StatusCell $w={127} />
        <StatusCell $w={27} />
        <StatusCell $w={27} />
        <StatusCell $w={47} />
        <StatusCell $w={71}>
          <svg width={60} height={8} viewBox="1233 0 60 8" fill="#555">
            <path d="M1236 .5h1v7h-1zM1242 .5v7l-4-3.500zM1257 .5v7l-4-3.500zM1269 .5v7l4-3.500zM1284 .5v7l4-3.500zM1289 .5h1v7h-1z" />
          </svg>
        </StatusCell>
        <StatusCell $w={68}>
          <svg width={56} height={12} viewBox="-1 0 56 12">
            <path d="M1 1h3v3H1zM5 1h3v3H5zM9 1h3v3H9zM1 5h3v3H1zM5 5h3v3H5zM9 5h3v3H9zM1 9h3v3H1zM5 9h3v3H5zM9 9h3v3H9zM22 1h11v6H22zM22 9h3v3h-3zM26 9h3v3h-3zM30 9h3v3h-3z" fill="#c0c0c0" />
            <path d="M43 1h11v11H43z" fill="#5a5a5a" />
          </svg>
        </StatusCell>
      </StatusBar>

      <TaskBar>
        <StartButton>
          <svg width={17} height={16} viewBox="0 0 17 16" fill="#fff"><path d="M0 2.300L7 1.300v6.200H0zM8 1.200L17 0v7.500H8zM0 8.500h7v6.200L0 13.700zM8 8.500h9V16L8 14.800z" /></svg>
        </StartButton>
        <TaskSearch>
          <svg width={17} height={18} viewBox="0 0 17 18" fill="none" stroke="#222" strokeWidth={1.300}><circle cx={10.500} cy={7} r={5.600} /><path d="M6.500 11.200L.5 17" /></svg>
          Type here to search
        </TaskSearch>
        <TaskButton $w={48}><AppIcon><svg width={18} height={18} viewBox="0 0 18 18"><circle cx={9} cy={9} r={7} fill="none" stroke="#fff" strokeWidth={2} /></svg></AppIcon></TaskButton>
        <TaskButton $w={49}>
          <AppIcon><svg width={18} height={16} viewBox="0 0 18 16" fill="none" stroke="#fff"><path d="M1.500 0v3.500h14V0M1.500 5.500h10v5h-10zM1.500 16v-3.500h10V16M15.500 8.500V16" /><path d="M14 4h3v3h-3z" fill="#fff" stroke="none" /></svg></AppIcon>
        </TaskButton>
        <TaskButton $w={50}>
          <AppIcon>
            <svg width={24} height={24} viewBox="0 0 24 24" fill="none">
              <path d="M20 16.500a8 8 0 1 1 1-4H8" stroke="#5cc9f5" strokeWidth={4.400} />
              <path d="M3 23c-4-3 2-12 8-17S22 0 22 3c0 1-.5 2-1 3" stroke="#f4c52c" strokeWidth={1.800} />
            </svg>
          </AppIcon>
        </TaskButton>
        <TaskButton $w={49}>
          <AppIcon>
            <svg width={24} height={22} viewBox="0 0 24 22">
              <path d="M1 2h9l2 2h11v15H1z" fill="#e8a92a" /><path d="M1 5h22v14H1z" fill="#fcd567" />
              <path d="M5 20v-7q0-2 2-2h10q2 0 2 2v7h-4v-4H9v4z" fill="#3c97dc" />
            </svg>
          </AppIcon>
          <TaskUnderline $w={40} $split />
        </TaskButton>
        <TaskButton $w={49}>
          <AppIcon>
            <svg width={24} height={24} viewBox="0 0 24 24">
              <circle cx={12} cy={12} r={12} fill="#fbc116" />
              <path d="M12 12L1.600 6A12 12 0 0 1 22.400 6H12z" fill="#e33b2e" />
              <path d="M1.600 6A12 12 0 0 0 12 24l5-9-5 1-5-3z" fill="#209c4f" />
              <circle cx={12} cy={12} r={5.500} fill="#fff" /><circle cx={12} cy={12} r={4.400} fill="#3478e5" />
            </svg>
          </AppIcon>
          <TaskUnderline $w={40} />
        </TaskButton>
        <TaskButton $w={49}>
          <AppIcon>
            <svg width={24} height={22} viewBox="0 0 24 22">
              <path d="M7 1l15 1v17l-3 2-17-4z" fill="#c9d3d4" /><path d="M8 1l13 1-5 17L2 16z" fill="#4d95a5" /><path d="M8 1l13 1-2 8L5 8z" fill="#a9d5dc" /><path d="M21 3l1 15-5 2z" fill="#e9e4d0" />
            </svg>
          </AppIcon>
          <TaskUnderline $w={40} $split />
        </TaskButton>
        <TaskButton $w={49}>
          <AppIcon>
            <svg width={22} height={22} viewBox="0 0 22 22">
              <path d="M1 10C2 4 6 1 11 1c6 0 10 4 10 10v2.500H8c.3 5 7 6 11.500 3v4C13 23.500 5 21 4.500 14.500 4.300 10.500 7 8 9.500 7 8.500 8 8 9 8 10h7.500C15.500 3 5 4 1 10z" fill="#0a7bdc" />
            </svg>
          </AppIcon>
          <TaskUnderline $w={40} />
        </TaskButton>
        <TaskButton $w={49}>
          <AppIcon>
            <svg width={24} height={24} viewBox="0 0 24 24" fill="none" stroke="#e0184d"><circle cx={12} cy={12} r={11.200} strokeWidth={1.300} /><ellipse cx={12} cy={12} rx={5.500} ry={9} strokeWidth={1.300} /><path d="M15 2c7 4 7 16 0 20" strokeWidth={1} /></svg>
          </AppIcon>
          <TaskUnderline $w={40} />
        </TaskButton>
        <TaskButton $w={48} $active>
          <AppIcon><TableauTile><TableauMark size={19} mono /></TableauTile></AppIcon>
          <TaskUnderline $w={48} />
        </TaskButton>
        <Tray>
          <svg width={68} height={20} viewBox="1140 738 68 20" fill="none" stroke="#fff">
            <path d="M1141.500 751l5.500-5.500 5.500 5.500" strokeWidth={1.300} />
            <path d="M1167 742.500h11.500v9H1166.500V747M1163.500 742.500h4v3h-4zM1165.500 746v7h3M1172.500 752v3M1168 755.500h9" />
            <path d="M1187.500 745.500h2l4-3.500v12.500l-4-4h-2z" />
            <circle cx={1198.500} cy={751.500} r={4.500} fill="#e0202c" stroke="none" /><path d="M1196.500 749.500l4 4M1200.500 749.500l-4 4" strokeWidth={1.200} />
          </svg>
          <Language>ENG</Language>
          <Clock>12:45<br />13-04-2023</Clock>
          <svg width={32} height={28} viewBox="1320 736 32 28">
            <path d="M1325 740h16v12h-9l-3 4v-4h-4z" fill="#fff" /><path d="M1328 743.500h10M1328 746.500h10M1328 749.500h10" stroke="#3b3d3e" />
            <circle cx={1341} cy={755} r={8} fill="#3b3d3e" stroke="#9a9a9a" />
            <text x={1341} y={759} textAnchor="middle" fontFamily="Open Sans, sans-serif" fontSize={11.500} fontWeight={600} fill="#fff">5</text>
          </svg>
          <EdgeGap /><DesktopEdge />
        </Tray>
      </TaskBar>
    </Window>
  );
}
